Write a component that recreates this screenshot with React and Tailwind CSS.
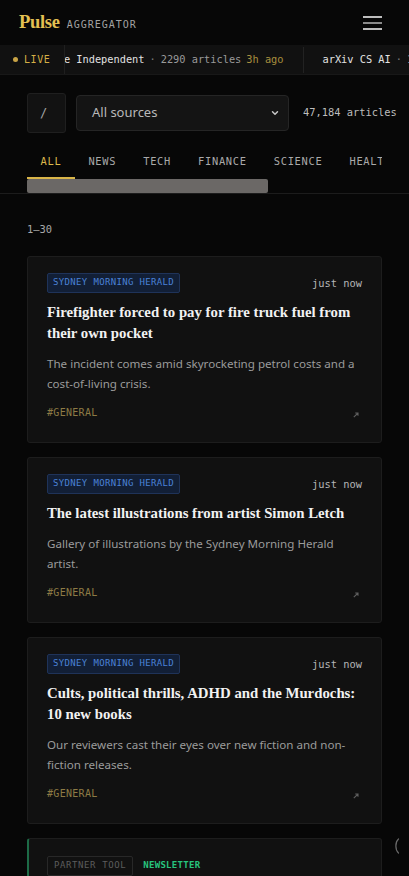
import React from "react";

const mono = "font-['DejaVu_Sans_Mono',monospace]";
const serif = "font-['Liberation_Serif',serif]";
const sans = "font-['Noto_Sans',sans-serif]";

const articles = [
  {
    source: "SYDNEY MORNING HERALD",
    time: "just now",
    title: "Firefighter forced to pay for fire truck fuel from their own pocket",
    summary: "The incident comes amid skyrocketing petrol costs and a cost-of-living crisis.",
    tag: "#GENERAL",
  },
  {
    source: "SYDNEY MORNING HERALD",
    time: "just now",
    title: "The latest illustrations from artist Simon Letch",
    summary: "Gallery of illustrations by the Sydney Morning Herald artist.",
    tag: "#GENERAL",
  },
  {
    source: "SYDNEY MORNING HERALD",
    time: "just now",
    title: "Cults, political thrills, ADHD and the Murdochs: 10 new books",
    summary: "Our reviewers cast their eyes over new fiction and non-fiction releases.",
    tag: "#GENERAL",
  },
];

const tabs = ["ALL", "NEWS", "TECH", "FINANCE", "SCIENCE", "HEALTH", "SPORTS"];

function Ticker() {
  const items = [
    { name: "The Independent", count: "2290", ago: "3h ago" },
    { name: "arXiv CS AI", count: "1184", ago: "1h ago" },
  ];
  return (
    <div className="flex h-[30px] items-center bg-[#111111] border-b border-[#181818]">
      <div className={`${mono} flex items-center gap-[6px] pl-[13px] pr-[14px] text-[10px] tracking-[0.6px] text-[#d4ae45]`}>
        <span className="h-[5px] w-[5px] rounded-full bg-[#c9a446]" />
        LIVE
      </div>
      <div className="flex h-full flex-1 overflow-hidden border-l border-[#1f1f1f]">
        <div className={`${mono} ml-[-33px] flex shrink-0 items-center whitespace-nowrap text-[10.3px]`}>
          {items.map((it) => (
            <div key={it.name} className="flex h-[26px] items-center gap-[5px] border-r border-[#222] px-[19px]">
              <span className="text-[#e2e2e2]">{it.name}</span>
              <span className="text-[#7a7a7a]">·</span>
              <span className="text-[#9a9a9a]">{it.count} articles</span>
              <span className="text-[#a88f3e]">{it.ago}</span>
            </div>
          ))}
        </div>
      </div>
    </div>
  );
}

function Card({ a }) {
  return (
    <div className="rounded-[3px] border border-[#1d1d1d] bg-[#111111] px-[19px] pt-[16px] pb-[22px]">
      <div className="flex items-center justify-between">
        <span className={`${mono} flex h-[20px] items-center rounded-[2px] border border-[#1f3359] bg-[#121f36] px-[5px] text-[9px] tracking-[0.35px] text-[#4a82d6]`}>
          {a.source}
        </span>
        <span className={`${mono} mt-[2px] text-[10.4px] text-[#b5b5b5]`}>{a.time}</span>
      </div>
      <h3 className={`${serif} mt-[9px] text-[14.8px] font-bold leading-[21px] text-[#f2f2f2]`}>{a.title}</h3>
      <p className={`${sans} mt-[10px] text-[11.6px] leading-[20px] text-[#9b9b9b]`}>{a.summary}</p>
      <div className="mt-[11px] flex items-center justify-between">
        <span className={`${mono} text-[10px] tracking-[0.3px] text-[#8d7b45]`}>{a.tag}</span>
        <svg className="mt-[5px] mr-[3px]" width="6" height="6" viewBox="0 0 6 6" fill="none">
          <path d="M0.8 5.2 L5 1 M2.2 1 H5 V3.8" stroke="#5e5e5e" strokeWidth="1.1" />
        </svg>
      </div>
    </div>
  );
}

export default function App() {
  return (
    <div className="relative min-h-screen bg-[#070707] text-white">
      {/* header */}
      <header className="flex h-[45px] items-center justify-between px-[19px]">
        <div className="flex items-baseline gap-[7px]">
          <span className={`${serif} text-[18.5px] font-bold tracking-[-0.3px] text-[#e4c053]`}>Pulse</span>
          <span className={`${mono} text-[10px] tracking-[1px] text-[#a3a3a3]`}>AGGREGATOR</span>
        </div>
        <button className="mr-[8px] flex w-[19px] flex-col gap-[4px]">
          <span className="h-[2px] w-full bg-[#bdbdbd]" />
          <span className="h-[2px] w-full bg-[#8a8a8a]" />
          <span className="h-[2px] w-full bg-[#bdbdbd]" />
        </button>
      </header>

      <Ticker />

      {/* filters */}
      <div className="flex items-center px-[27px] pt-[18px]">
        <div className={`${mono} flex h-[40px] w-[39px] shrink-0 items-center rounded-[3px] border border-[#1f1f1f] bg-[#121212] pl-[12px] text-[12px] text-[#a5a5a5]`}>
          /
        </div>
        <div className="ml-[10px] flex h-[36px] w-[213px] shrink-0 items-center justify-between rounded-[4px] border border-[#252525] bg-[#141414] pl-[15px] pr-[8px]">
          <span className={`${sans} text-[13px] text-[#b9b9b9]`}>All sources</span>
          <svg width="10" height="10" viewBox="0 0 24 24" fill="none" stroke="#c9c9c9" strokeWidth="3.5" strokeLinecap="round" strokeLinejoin="round">
            <path d="M6 9l6 6 6-6" />
          </svg>
        </div>
        <span className={`${mono} ml-[14px] shrink-0 whitespace-nowrap text-[10.4px] text-[#bdbdbd]`}>47,184 articles</span>
      </div>

      {/* tabs */}
      <div className="mt-[12px] border-b border-[#1c1c1c]">
        <div className="mx-[27px] overflow-hidden">
          <div className="flex">
            {tabs.map((t, i) => (
              <div
                key={t}
                className={`${mono} shrink-0 whitespace-nowrap border-b-2 px-[13.5px] pt-[9px] pb-[7px] text-[10.4px] tracking-[0.7px] ${
                  i === 0 ? "border-[#d9b548] text-[#dcb94c]" : "border-transparent text-[#a9a9a9]"
                }`}
              >
                {t}
              </div>
            ))}
          </div>
          <div className="h-[14px] w-[241px] rounded-[2px] bg-[#6b6866]" />
        </div>
      </div>

      <div className="px-[27px]">
        <div className={`${mono} pt-[28px] text-[10.4px] text-[#a8a8a8]`}>1–30</div>

        <div className="mt-[19px] flex flex-col gap-[14px]">
          {articles.map((a, i) => (
            <Card key={i} a={a} />
          ))}

          <div className="rounded-[3px] border border-[#1d1d1d] border-l-2 border-l-[#1d6b47] bg-[#111111] px-[18px] pt-[17px] pb-[22px]">
            <div className="flex items-center gap-[10px]">
              <span className={`${mono} flex h-[20px] items-center rounded-[2px] border border-[#282828] px-[6px] text-[9px] tracking-[0.6px] text-[#5c5c5c]`}>
                PARTNER TOOL
              </span>
              <span className={`${mono} text-[9px] font-bold tracking-[0.3px] text-[#27c47e]`}>NEWSLETTER</span>
            </div>
            <h3 className={`${serif} mt-[10px] text-[14.8px] font-bold leading-[21px] text-[#f2f2f2]`}>
              Get the day's top stories in your inbox
            </h3>
          </div>
        </div>
      </div>

      {/* side handle */}
      <svg className="absolute left-[393px] top-[838px]" width="8" height="16" viewBox="0 0 8 16" fill="none">
        <path d="M5.5 1 C2 4, 2 12, 5.5 15" stroke="#6a6a6a" strokeWidth="1.2" strokeLinecap="round" />
      </svg>
    </div>
  );
}
